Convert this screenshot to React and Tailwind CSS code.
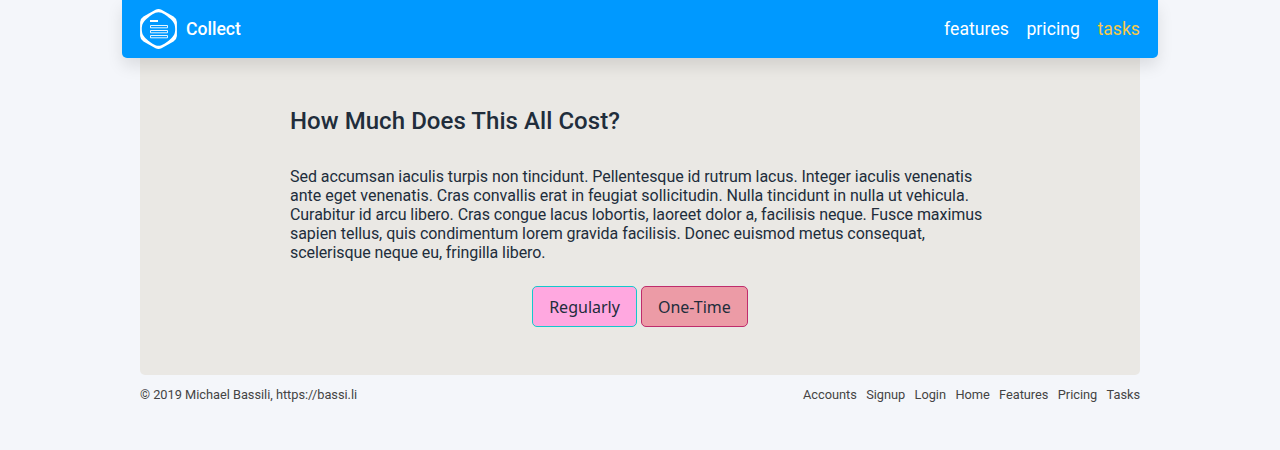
const lines = [
  ['Sed accumsan iaculis turpis non tincidunt. Pellentesque id rutrum lacus. Integer iaculis venenatis', 'tracking-[-0.052px]'],
  ['ante eget venenatis. Cras convallis erat in feugiat sollicitudin. Nulla tincidunt in nulla ut vehicula.', 'tracking-[-0.005px]'],
  ['Curabitur id arcu libero. Cras congue lacus lobortis, laoreet dolor a, facilisis neque. Fusce maximus', 'tracking-[-0.059px]'],
  ['sapien tellus, quis condimentum lorem gravida facilisis. Donec euismod metus consequat,', 'tracking-[-0.046px]'],
  ['scelerisque neque eu, fringilla libero.', 'tracking-[-0.077px]'],
];

export default function App() {
  return (
    <div className="min-h-screen bg-[#f4f6fa] font-['Roboto',sans-serif] text-[#212d3b]">
      <div className="mx-auto w-[1036px]">
        <nav className="relative z-10 flex h-[58px] items-center justify-between rounded-b-[5px] bg-[#0099ff] px-[18px] text-[17.6px] text-white shadow-[0_8px_16px_rgba(0,0,0,0.1)]">
          <a className="flex items-center gap-[9px] font-medium">
            <svg width="37" height="40" viewBox="0 0 37 40" fill="#fff">
              <path fillRule="evenodd" d="M15.5 .8Q18.5 -.6 21.5 .8L33.5 7.4Q36.6 9.3 36.9 13V27Q36.6 30.7 33.5 32.6L21.5 39.2Q18.5 40.6 15.5 39.2L3.5 32.6Q.4 30.7 .1 27V13Q.4 9.3 3.5 7.4ZM18.5 3.2C14.5 3.2 10.5 6.5 7 9.5C3 13 1.8 15.5 1.8 20S3 27 7 30.5C10.5 33.5 14.5 36.8 18.5 36.8S26.5 33.5 30 30.5C34 27 35.2 24.5 35.2 20S34 13 30 9.5C26.5 6.5 22.5 3.2 18.5 3.2Z" />
              <path d="M10 11h8v2h-8z" />
              <path d="M10.5 16.5h17v2.3h-17zM10.5 21.5h17v2.3h-17zM10.5 26.5h17v2.3h-17z" fill="none" stroke="#fff" strokeWidth=".9" />
            </svg>
            Collect
          </a>
          <div className="flex gap-[17.5px] tracking-[0.04px]"><a>features</a><a>pricing</a><a className="text-[#f7c948]">tasks</a></div>
        </nav>
        <main className="mx-[18px] h-[317px] rounded-b-[5px] bg-[#eae8e4] px-[150px] pt-[47px]">
          <h1 className="text-2xl font-medium tracking-[0.06px]">How Much Does This All Cost?</h1>
          <p className="mt-[30px] text-base leading-[19px] whitespace-nowrap">
            {lines.map(([text, tracking]) => <span key={text} className={`block ${tracking}`}>{text}</span>)}
          </p>
          <div className="mt-6 flex justify-center gap-1 font-['Noto_Sans',sans-serif]">
            <button className="h-[41px] rounded-[5px] border border-[#14c8cc] bg-[#ffa8e0] px-4">Regularly</button>
            <button className="h-[41px] rounded-[5px] border border-[#bf2c6c] bg-[#ec9ba6] px-4">One-Time</button>
          </div>
        </main>
        <footer className="mx-[18px] flex justify-between pt-[10px] text-[12.8px] leading-5 text-[#444]">
          <span className="tracking-[-0.02px]">© 2019 Michael Bassili, https://bassi.li</span>
          <div className="flex gap-[9.4px] tracking-[-0.03px]"><a>Accounts</a><a>Signup</a><a>Login</a><a>Home</a><a>Features</a><a>Pricing</a><a>Tasks</a></div>
        </footer>
      </div>
    </div>
  );
}
